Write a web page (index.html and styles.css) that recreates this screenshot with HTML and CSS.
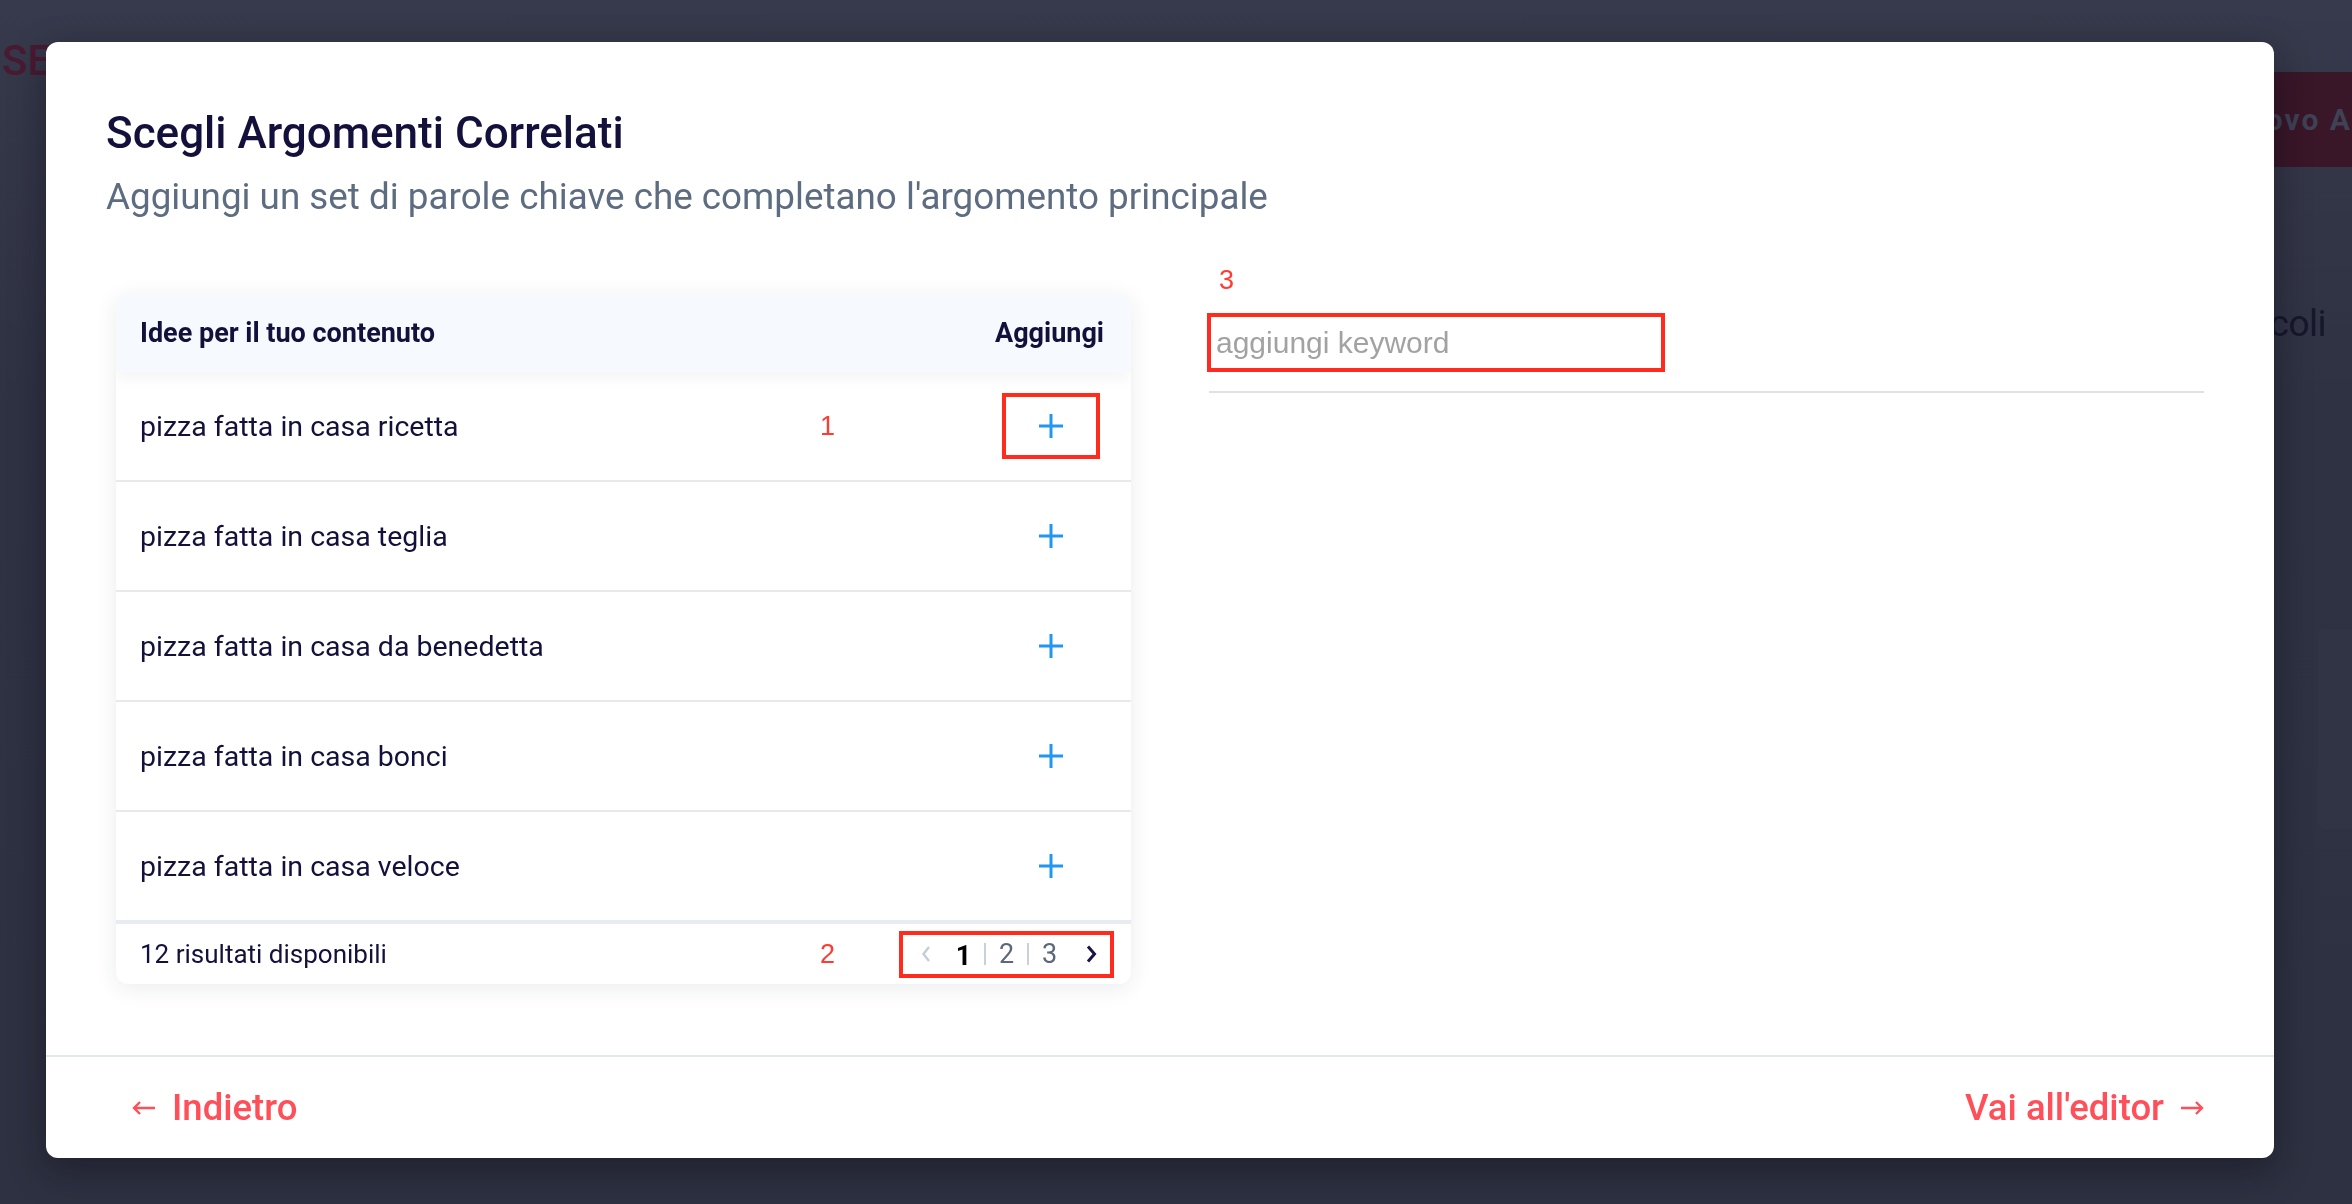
FILE: index.html
```html
<!DOCTYPE html>
<html lang="it">
<head>
<meta charset="utf-8">
<title>Scegli Argomenti Correlati</title>
<link rel="stylesheet" href="styles.css">
</head>
<body>
<div class="page">
  <header class="topbar">
    <div class="logo">SEOZoom</div>
    <div class="newbtn">+ Nuovo A</div>
  </header>
  <div class="pagehead">
    <span class="pagetitle">I tuoi articoli</span>
  </div>
  <div class="sidecard"></div>
</div>

<div class="overlay">
  <div class="modal">
    <div class="modal-head">
      <h1 class="title">Scegli Argomenti Correlati</h1>
      <p class="subtitle">Aggiungi un set di parole chiave che completano l'argomento principale</p>
    </div>

    <div class="modal-body">
      <div class="card">
        <div class="card-head">
          <span>Idee per il tuo contenuto</span>
          <span>Aggiungi</span>
        </div>
        <div class="row">
          <span>pizza fatta in casa ricetta</span>
          <span class="note note-row">1</span>
          <span class="add marked"><svg width="24" height="24" viewBox="0 0 24 24"><path d="M12 0v24M0 12h24" stroke="#2196f3" stroke-width="3" fill="none"/></svg></span>
        </div>
        <div class="row">
          <span>pizza fatta in casa teglia</span>
          <span class="add"><svg width="24" height="24" viewBox="0 0 24 24"><path d="M12 0v24M0 12h24" stroke="#2196f3" stroke-width="3" fill="none"/></svg></span>
        </div>
        <div class="row">
          <span>pizza fatta in casa da benedetta</span>
          <span class="add"><svg width="24" height="24" viewBox="0 0 24 24"><path d="M12 0v24M0 12h24" stroke="#2196f3" stroke-width="3" fill="none"/></svg></span>
        </div>
        <div class="row">
          <span>pizza fatta in casa bonci</span>
          <span class="add"><svg width="24" height="24" viewBox="0 0 24 24"><path d="M12 0v24M0 12h24" stroke="#2196f3" stroke-width="3" fill="none"/></svg></span>
        </div>
        <div class="row last">
          <span>pizza fatta in casa veloce</span>
          <span class="add"><svg width="24" height="24" viewBox="0 0 24 24"><path d="M12 0v24M0 12h24" stroke="#2196f3" stroke-width="3" fill="none"/></svg></span>
        </div>
        <div class="card-foot">
          <span>12 risultati disponibili</span>
          <span class="note note-row">2</span>
          <div class="pager">
            <svg class="chev-l" width="12" height="20" viewBox="0 0 12 20"><path d="M9 3L3.5 10L9 17" fill="none" stroke="#c3ced7" stroke-width="2.4"/></svg>
            <span class="pg active">1</span>
            <span class="sep"></span>
            <span class="pg">2</span>
            <span class="sep"></span>
            <span class="pg">3</span>
            <svg class="chev-r" width="12" height="20" viewBox="0 0 12 20"><path d="M3 2.5L9.5 10L3 17.5" fill="none" stroke="#1b1547" stroke-width="3"/></svg>
          </div>
        </div>
      </div>

      <div class="kw-col">
        <span class="note note-kw">3</span>
        <div class="kw-field">
          <input class="kw-input" type="text" placeholder="aggiungi keyword">
        </div>
      </div>
    </div>

    <div class="modal-foot">
      <a class="nav-link"><svg width="24" height="14" viewBox="0 0 24 14"><path d="M23 7H2M8 1L2 7L8 13" fill="none" stroke="#ff4f58" stroke-width="2.4"/></svg><span>Indietro</span></a>
      <a class="nav-link"><span>Vai all'editor</span><svg width="24" height="14" viewBox="0 0 24 14"><path d="M1 7H22M16 1L22 7L16 13" fill="none" stroke="#ff4f58" stroke-width="2.4"/></svg></a>
    </div>
  </div>
</div>
</body>
</html>
```

FILE: styles.css
```css
html, body {
  margin: 0;
  padding: 0;
}

body {
  width: 2352px;
  height: 1204px;
  overflow: hidden;
  font-family: Roboto, "Noto Sans", Arial, sans-serif;
  background: linear-gradient(180deg, #373a4c 0px, #343748 120px, #2f3243 400px, #2e3141 1204px);
}

/* background page (dimmed) */
.page {
  height: 100%;
  display: flex;
  flex-direction: column;
}

.topbar {
  display: flex;
  justify-content: space-between;
  align-items: flex-start;
}

.logo {
  margin-top: 38px;
  margin-left: 2px;
  font-size: 42px;
  line-height: 46px;
  color: #4a1a32;
  font-weight: 500;
}

.newbtn {
  margin-top: 72px;
  width: 260px;
  height: 95px;
  display: flex;
  align-items: center;
  justify-content: flex-end;
  background: #391628;
  color: #3e4254;
  font-size: 30px;
  font-weight: 700;
  letter-spacing: 2px;
  white-space: nowrap;
}

.pagehead {
  display: flex;
  justify-content: flex-end;
  margin-top: 132px;
  padding-right: 26px;
}

.pagetitle {
  font-size: 37px;
  line-height: 50px;
  color: #15172b;
  letter-spacing: -0.5px;
}

.sidecard {
  align-self: flex-end;
  width: 34px;
  height: 200px;
  margin-top: 280px;
  background: #313445;
  border-radius: 6px 0 0 6px;
}

/* modal */
.overlay {
  position: fixed;
  inset: 0;
}

.modal {
  position: absolute;
  left: 46px;
  top: 42px;
  width: 2228px;
  height: 1116px;
  background: #ffffff;
  border-radius: 12px;
  display: flex;
  flex-direction: column;
  box-shadow: 0 12px 36px rgba(10, 12, 22, 0.45);
}

.modal-head {
  padding: 66px 60px 0 60px;
}

.title {
  margin: 0;
  font-size: 44px;
  line-height: 50px;
  font-weight: 500;
  color: #14103c;
}

.subtitle {
  margin: 19px 0 0 0;
  font-size: 36.8px;
  line-height: 40px;
  color: #5d6c80;
}

.modal-body {
  flex: 1;
  display: flex;
  align-items: flex-start;
  gap: 76px;
  padding: 77px 70px 0 70px;
}

/* ideas card */
.card {
  flex: none;
  width: 1015px;
  border-radius: 12px;
  background: #ffffff;
  box-shadow: 0 4px 22px rgba(30, 40, 70, 0.09);
  overflow: hidden;
}

.card-head {
  position: relative;
  z-index: 1;
  height: 78px;
  display: flex;
  align-items: center;
  justify-content: space-between;
  padding: 0 27px 0 24px;
  background: #f6f9fd;
  font-size: 27px;
  font-weight: 700;
  color: #14103c;
  box-shadow: 0 8px 14px rgba(20, 30, 60, 0.04);
}

.row {
  position: relative;
  height: 108px;
  display: flex;
  align-items: center;
  justify-content: space-between;
  padding: 0 31px 0 24px;
  border-bottom: 2px solid #e9e9ec;
  font-size: 28.5px;
  color: #14103c;
}

.row.last {
  border-bottom: none;
}

.add {
  width: 98px;
  height: 66px;
  box-sizing: border-box;
  border: 4px solid transparent;
  display: flex;
  align-items: center;
  justify-content: center;
}

.add.marked {
  border-color: #ff2b1c;
}

.note {
  position: absolute;
  font-family: "Liberation Sans", Arial, sans-serif;
  font-size: 27px;
  line-height: 30px;
  color: #ff3b33;
}

.note-row {
  left: 704px;
  top: 50%;
  margin-top: -15px;
}

.card-foot {
  position: relative;
  height: 60px;
  display: flex;
  align-items: center;
  justify-content: space-between;
  padding: 0 17px 0 24px;
  border-top: 4px solid #e8ecf0;
  font-size: 26px;
  color: #14103c;
}

.pager {
  display: flex;
  align-items: center;
  box-sizing: border-box;
  height: 47px;
  border: 4px solid #ff2b1c;
  padding: 0 13px 0 17px;
}

.chev-l {
  margin-right: 11px;
}

.chev-r {
  margin-left: 15px;
}

.pg {
  width: 41px;
  text-align: center;
  font-size: 27px;
  line-height: 30px;
  color: #5c677a;
}

.pg.active {
  color: #000000;
  font-weight: 700;
  padding-top: 4px;
}

.sep {
  width: 2px;
  height: 22px;
  background: #c8d1d9;
}

/* keyword column */
.kw-col {
  position: relative;
  flex: 1;
  padding-top: 19px;
}

.note-kw {
  left: 12px;
  top: -29px;
}

.kw-field {
  margin-left: 2px;
  padding-bottom: 19px;
  border-bottom: 2px solid #e1e1e1;
}

.kw-input {
  display: block;
  box-sizing: border-box;
  width: 458px;
  height: 59px;
  margin: 0 0 0 -2px;
  border: 4px solid #ff2b1c;
  padding: 0 0 0 5px;
  font-family: "Liberation Sans", Arial, sans-serif;
  font-size: 30px;
  color: #333333;
  outline: none;
  background: #ffffff;
}

.kw-input::placeholder {
  color: #a2a2a2;
}

/* modal footer */
.modal-foot {
  height: 101px;
  display: flex;
  align-items: center;
  justify-content: space-between;
  padding: 0 70px 0 86px;
  border-top: 2px solid #e3e8ec;
}

.nav-link {
  display: flex;
  align-items: center;
  gap: 16px;
  font-size: 36.5px;
  font-weight: 500;
  color: #ff4f58;
  text-decoration: none;
}
```
